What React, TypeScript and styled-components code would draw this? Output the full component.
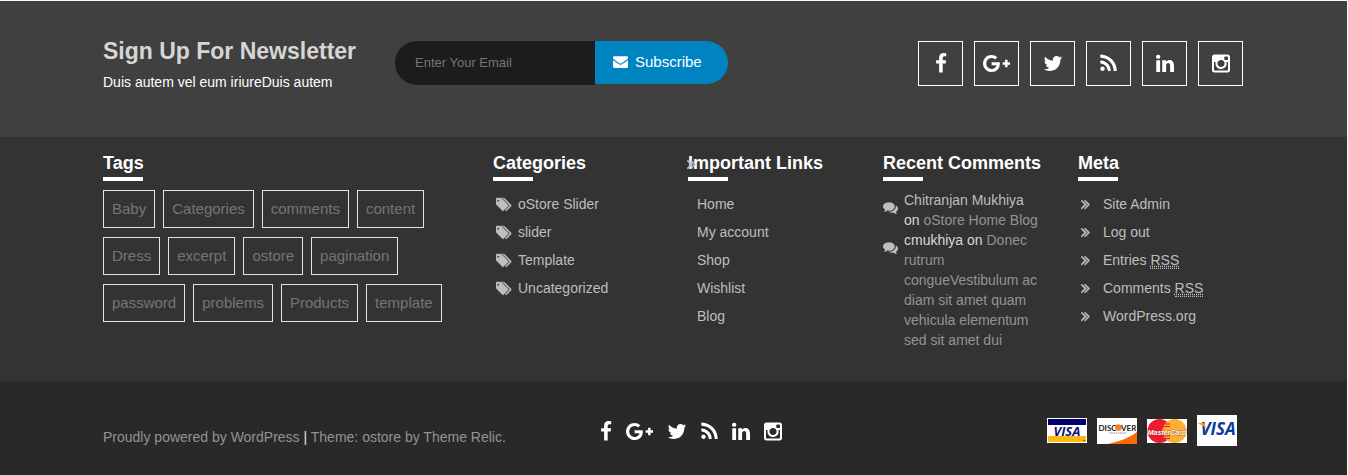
import React from "react";
import styled, { createGlobalStyle } from "styled-components";

const GlobalStyle = createGlobalStyle`
  *, *::before, *::after { box-sizing: border-box; }
  body {
    margin: 0;
    background: #fff;
    color: #fff;
    font: 14px/20px "Liberation Sans", Arial, sans-serif;
  }
  ul, h2, h3, p { margin: 0; padding: 0; }
  ul { list-style: none; }
  a { color: inherit; text-decoration: none; }
`;

/* ---------- icons ---------- */

const glyphs = {
  facebook: {
    box: "384 0 1024 1792",
    ratio: 1024 / 1792,
    d: "M1343 12v264h-157q-86 0-116 36t-30 108v189h293l-39 296h-254v759h-306v-759h-255v-296h255v-218q0-186 104-288.500t277-102.500q147 0 228 12z",
  },
  googlePlus: {
    box: "0 0 2304 1792",
    ratio: 2304 / 1792,
    d: "M1437 913q0 208-87 370.500t-248 254-369 91.500q-149 0-285-58t-234-156-156-234-58-285 58-285 156-234 234-156 285-58q286 0 491 192l-199 191q-117-113-292-113-123 0-227.500 62t-165.500 168.500-61 232.500 61 232.500 165.500 168.500 227.500 62q83 0 152.500-23t114.500-57.500 78.500-78.500 49-83 21.500-74h-416v-252h692q12 63 12 122zm867-122v210h-209v209h-210v-209h-209v-210h209v-209h210v209h209z",
  },
  twitter: {
    box: "64 0 1664 1792",
    ratio: 1664 / 1792,
    d: "M1684 408q-67 98-162 167 1 14 1 42 0 130-38 259.500t-115.500 248.500-184.500 210.500-258 146-323 54.500q-271 0-496-145 35 4 78 4 225 0 401-138-105-2-188-64.500t-114-159.500q33 5 61 5 43 0 85-11-112-23-185.500-111.500t-73.500-205.500v-4q68 38 146 41-66-44-105-115t-39-154q0-88 44-163 121 149 294.500 238.500t371.500 99.500q-8-38-8-74 0-134 94.500-228.500t228.500-94.500q140 0 236 102 109-21 205-78-37 115-142 178 93-10 186-50z",
  },
  rss: {
    box: "192 0 1408 1792",
    ratio: 1408 / 1792,
    d: "M576 1344q0 80-56 136t-136 56-136-56-56-136 56-136 136-56 136 56 56 136zm512 123q2 28-17 48-18 21-47 21h-135q-25 0-43-16.500t-20-41.500q-22-229-184.500-391.500t-391.500-184.500q-25-2-41.500-20t-16.500-43v-135q0-29 21-47 17-17 43-17h5q160 13 306 80.500t259 181.500q114 113 181.500 259t80.500 306zm512 2q2 27-18 47-18 20-46 20h-143q-26 0-44.500-17.500t-19.500-42.500q-12-215-101-408.500t-231.500-336-336-231.500-408.500-102q-25-1-42.500-19.500t-17.500-43.500v-143q0-28 20-46 18-18 44-18h3q262 13 501.500 120t425.500 294q187 186 294 425.500t120 501.500z",
  },
  linkedin: {
    box: "128 0 1536 1792",
    ratio: 1536 / 1792,
    d: "M477 625v991h-330v-991h330zm21-306q1 73-50.500 122t-135.500 49h-2q-82 0-132-49t-50-122q0-74 51.500-122.500t134.500-48.500 133 48.500 51 122.500zm1166 729v568h-329v-530q0-105-40.500-164.500t-126.500-59.500q-63 0-105.500 34.500t-63.500 85.500q-11 30-11 81v553h-329q2-399 2-647t-1-296l-1-48h329v144h-2q20-32 41-56t56.500-52 87-43.500 114.500-15.500q171 0 275 113.500t104 332.500z",
  },
  instagram: {
    box: "128 0 1536 1792",
    ratio: 1536 / 1792,
    d: "M1490 1426v-648h-135q20 63 20 131 0 126-64 232.500t-174 168.500-240 62q-197 0-337-135.500t-140-327.500q0-68 20-131h-141v648q0 26 17.500 43.500t43.500 17.500h1069q25 0 43-17.500t18-43.500zm-284-533q0-124-90.500-211.500t-218.500-87.500q-127 0-217.500 87.500t-90.500 211.500 90.500 211.500 217.500 87.500q128 0 218.500-87.500t90.500-211.500zm284-360v-165q0-28-20-48.500t-49-20.500h-174q-29 0-49 20.500t-20 48.500v165q0 29 20 49t49 20h174q29 0 49-20t20-49zm174-208v1142q0 81-58 139t-139 58h-1142q-81 0-139-58t-58-139v-1142q0-81 58-139t139-58h1142q81 0 139 58t58 139z",
  },
  envelope: {
    box: "0 0 1792 1792",
    ratio: 1,
    d: "M1792 710v794q0 66-47 113t-113 47h-1472q-66 0-113-47t-47-113v-794q44 49 101 87 362 246 497 345 57 42 92.500 65.500t94.500 48 110 24.500h2q51 0 110-24.500t94.500-48 92.500-65.500q170-123 498-345 57-39 100-87zm0-294q0 79-49 151t-122 123q-376 261-468 325-10 7-42.500 31t-54 38.500-52 32.500-57.500 27-50 9h-2q-23 0-50-9t-57.500-27-52-32.500-54-38.500-42.500-31q-91-64-262-182.500t-205-142.500q-62-42-117-115.500t-55-136.500q0-78 41.500-130t118.500-52h1472q65 0 112.500 47t47.500 113z",
  },
  tags: {
    box: "0 0 1920 1792",
    ratio: 1920 / 1792,
    d: "M384 448q0-53-37.500-90.500t-90.500-37.500-90.500 37.500-37.500 90.500 37.500 90.500 90.500 37.500 90.500-37.500 37.500-90.500zm1067 576q0 53-37 90l-491 492q-39 37-91 37-53 0-90-37l-715-716q-38-37-64.500-101t-26.500-117v-416q0-52 38-90t90-38h416q53 0 117 26.500t102 64.500l715 714q37 39 37 91zm384 0q0 53-37 90l-491 492q-39 37-91 37-36 0-59-14t-53-45l470-470q37-37 37-90 0-52-37-91l-715-714q-38-38-102-64.500t-117-26.500h224q53 0 117 26.500t102 64.500l715 714q37 39 37 91z",
    weight: 50,
  },
  comments: {
    box: "0 0 1792 1792",
    ratio: 1,
    d: "M1408 768q0 139-94 257t-256.500 186.500-353.500 68.500q-86 0-176-16-124 88-278 128-36 9-86 16h-3q-11 0-20.500-8t-11.500-21q-1-3-1-6.500t.5-6.500 2-6l2.500-5 3.500-5.500 4-5 4.500-5 4-4.500q5-6 23-25t26-29.500 22.500-29 25-38.500 20.500-44q-124-72-195-177t-71-224q0-139 94-257t256.500-186.500 353.500-68.500 353.500 68.500 256.500 186.500 94 257zm384 256q0 120-71 224.500t-195 176.500q10 24 20.500 44t25 38.500 22.500 29 26 29.500 23 25q1 1 4 4.500t4.500 5 4 5 3.500 5.500l2.500 5 2 6 .5 6.500-1 6.500q-3 14-13 22t-22 7q-50-7-86-16-154-40-278-128-90 16-176 16-271 0-472-132 58 4 88 4 161 0 309-45t264-129q125-92 192-212t67-254q0-77-23-152 129 71 204 178t75 230z",
  },
  chevrons: {
    box: "384 0 1024 1792",
    ratio: 1024 / 1792,
    d: "M979 960q0 13-10 23l-466 466q-10 10-23 10t-23-10l-50-50q-10-10-10-23t10-23l393-393-393-393q-10-10-10-23t10-23l50-50q10-10 23-10t23 10l466 466q10 10 10 23zm384 0q0 13-10 23l-466 466q-10 10-23 10t-23-10l-50-50q-10-10-10-23t10-23l393-393-393-393q-10-10-10-23t10-23l50-50q10-10 23-10t23 10l466 466q10 10 10 23z",
    weight: 80,
  },
};

type GlyphName = keyof typeof glyphs;

const Svg = styled.svg`
  display: block;
  flex: none;
  fill: currentColor;
`;

function Icon({ name, size }: { name: GlyphName; size: number }) {
  const g: { box: string; ratio: number; d: string; weight?: number } = glyphs[name];
  return (
    <Svg viewBox={g.box} width={Math.round(size * g.ratio)} height={size} aria-hidden="true">
      <path d={g.d} stroke="currentColor" strokeWidth={g.weight ?? 0} />
    </Svg>
  );
}

/* ---------- layout ---------- */

const Page = styled.footer`
  border-top: 1px solid #fafafa;
  border-right: 1px solid #fafafa;
`;

const Band = styled.section<{ $bg: string; $height: number }>`
  background: ${(p) => p.$bg};
  min-height: ${(p) => p.$height}px;
`;

const Container = styled.div`
  max-width: 1171px;
  margin: 0 auto;
  padding: 0 16px 0 15px;
`;

const NewsletterRow = styled(Container)`
  display: grid;
  grid-template-columns: 292px auto 1fr;
  align-items: start;
  padding-top: 40px;

  @media (max-width: 1100px) {
    grid-template-columns: 1fr;
    gap: 20px;
    padding-bottom: 20px;
  }
`;

const NewsletterTitle = styled.h2`
  color: #d6d6d6;
  font-size: 23px;
  line-height: 20px;
  margin-bottom: 11px;
`;

const Form = styled.form`
  display: flex;
  align-items: flex-start;
`;

const EmailInput = styled.input`
  width: 200px;
  height: 44px;
  padding: 0 20px 2px;
  border: 0;
  border-radius: 22px 0 0 22px;
  background: #1c1c1c;
  color: #ccc;
  font: 13px "Liberation Sans", Arial, sans-serif;
  outline: none;

  &::placeholder {
    color: #757575;
    opacity: 1;
  }
`;

const SubscribeButton = styled.button`
  display: flex;
  align-items: center;
  gap: 7px;
  height: 43px;
  padding: 0 26px 2px 18px;
  border: 0;
  border-radius: 0 22px 22px 0;
  background: #0083c1;
  color: #fff;
  font: 15px "Liberation Sans", Arial, sans-serif;
  cursor: pointer;
`;

const SocialList = styled.ul<{ $gap: number }>`
  display: flex;
  flex-wrap: wrap;
  gap: ${(p) => p.$gap}px;
`;

const BoxedSocials = styled(SocialList)`
  justify-content: flex-end;
`;

const SocialLink = styled.a<{ $boxed?: boolean }>`
  display: flex;
  align-items: center;
  justify-content: center;
  color: #fff;
  ${(p) => p.$boxed && "width: 45px; height: 45px; border: 1px solid #fff;"}
`;

const WidgetGrid = styled(Container)`
  display: grid;
  grid-template-columns: repeat(6, 1fr);
  column-gap: 30px;
  padding-top: 15px;

  @media (max-width: 1100px) {
    grid-template-columns: repeat(2, 1fr);
    row-gap: 24px;
    padding-bottom: 24px;
  }
`;

const Widget = styled.section<{ $wide?: boolean }>`
  min-width: 0;
  ${(p) => p.$wide && "grid-column: span 2;"}
`;

const WidgetTitle = styled.h3`
  position: relative;
  margin-bottom: 9px;
  font-size: 18px;
  line-height: 22px;
  white-space: nowrap;

  &::after {
    content: "";
    display: block;
    width: 40px;
    height: 4px;
    margin-top: 3px;
    background: #fff;
  }
`;

const TitleMark = styled.span`
  position: absolute;
  left: -1px;
  top: 4px;
  color: #bbb;
`;

const TagCloud = styled.ul`
  display: flex;
  flex-wrap: wrap;
  gap: 9px 8px;
`;

const Tag = styled.a`
  display: block;
  padding: 8px;
  border: 1px solid #e4e4e4;
  color: #757575;
  font-size: 15px;
  line-height: 20px;
`;

const LinkItem = styled.li<{ $indent: number; $gap?: number }>`
  display: flex;
  align-items: center;
  gap: ${(p) => p.$gap ?? 0}px;
  padding-left: ${(p) => p.$indent}px;
  color: #bebebe;
  line-height: 28px;
  white-space: nowrap;
`;

const Abbr = styled.abbr`
  border-bottom: 1px dotted #bbb;
  text-decoration: underline dotted;
`;

const CommentItem = styled.li`
  display: flex;
  gap: 6px;
  padding-right: 6px;
  color: #bebebe;

  svg {
    margin-top: 10px;
  }
`;

const CommentText = styled.p`
  color: #d8d8d8;
`;

const Muted = styled.a`
  color: #939393;
`;

const Author = styled.a`
  color: #bebebe;
`;

const BottomRow = styled(Container)`
  display: grid;
  grid-template-columns: 497px 1fr auto;
  align-items: start;
  padding-top: 34px;

  @media (max-width: 1100px) {
    grid-template-columns: 1fr;
    gap: 16px;
    padding-bottom: 20px;
  }
`;

const Credits = styled.p`
  padding-top: 12px;
  color: #e4e4e4;
`;

const BottomSocials = styled(SocialList)`
  padding-top: 6px;
`;

const CardList = styled.ul`
  display: flex;
  align-items: center;
  gap: 10px;
  padding-right: 6px;
`;

/* ---------- payment cards ---------- */

const VisaClassic = () => (
  <Svg width="40" height="25" viewBox="0 0 40 25" role="img" aria-label="Visa">
    <rect width="40" height="25" fill="#fff" />
    <rect x="1" y="1" width="38" height="6" fill="#00006c" />
    <rect x="1" y="18" width="38" height="6" fill="#fdb913" />
    <rect x="36" y="22" width="2" height="1" fill="#7a6a30" />
    <text x="20" y="17.600" textAnchor="middle" fontFamily="Open Sans, sans-serif" fontSize="13" fontWeight="700" fontStyle="italic" fill="#12127a">VISA</text>
  </Svg>
);

const Discover = () => (
  <Svg width="40" height="26" viewBox="0 0 40 26" role="img" aria-label="Discover">
    <rect width="40" height="26" fill="#fff" />
    <path d="M11 26Q32 21 40 14V26Z" fill="#ff6a00" />
    <text x="1.500" y="12.500" fontFamily="Lato, sans-serif" fontSize="8" fontWeight="700" fill="#222">DISC</text>
    <circle cx="21.500" cy="9.500" r="3.300" fill="#f58220" />
    <text x="24" y="12.500" fontFamily="Lato, sans-serif" fontSize="8" fontWeight="700" fill="#222">VER</text>
    <path d="M12 15h17" stroke="#888" strokeWidth="1" strokeDasharray="1.500 .7" />
  </Svg>
);

const MasterCard = () => (
  <Svg width="40" height="24" viewBox="0 0 40 24" role="img" aria-label="MasterCard">
    <rect width="40" height="24" fill="#fff" />
    <circle cx="12.500" cy="12" r="12" fill="#ed1c2e" />
    <circle cx="27.500" cy="12" r="12" fill="#fbb034" />
    <path d="M17 5h6M16 7.500h7M16 17h7M17 19.500h6" stroke="#ed1c2e" strokeWidth="1.200" />
    <text
      x="20"
      y="15.500"
      textAnchor="middle"
      fontFamily="Liberation Sans, Arial, sans-serif"
      fontSize="7"
      fontWeight="700"
      fontStyle="italic"
      fill="#fff"
      stroke="#7a2020"
      strokeOpacity="0.5"
      strokeWidth="1"
      paintOrder="stroke"
    >
      MasterCard
    </text>
  </Svg>
);

const VisaModern = () => (
  <Svg width="40" height="31" viewBox="0 0 40 31" role="img" aria-label="Visa">
    <rect width="40" height="31" fill="#fff" />
    <text x="21" y="20" textAnchor="middle" fontFamily="Open Sans, sans-serif" fontSize="17" fontWeight="700" fontStyle="italic" fill="#0a3a9a">VISA</text>
    <path d="M1 8h5q1.500 0 2 2l1 4Q6 10 1 8.600Z" fill="#f7a51c" />
  </Svg>
);

/* ---------- content ---------- */

const socials: { name: GlyphName; label: string }[] = [
  { name: "facebook", label: "Facebook" },
  { name: "googlePlus", label: "Google Plus" },
  { name: "twitter", label: "Twitter" },
  { name: "rss", label: "RSS" },
  { name: "linkedin", label: "LinkedIn" },
  { name: "instagram", label: "Instagram" },
];

const tags = [
  "Baby", "Categories", "comments", "content", "Dress", "excerpt",
  "ostore", "pagination", "password", "problems", "Products", "template",
];

const categories = ["oStore Slider", "slider", "Template", "Uncategorized"];
const links = ["Home", "My account", "Shop", "Wishlist", "Blog"];

const rss = <Abbr title="Really Simple Syndication">RSS</Abbr>;
const meta: React.ReactNode[] = ["Site Admin", "Log out", <>Entries {rss}</>, <>Comments {rss}</>, "WordPress.org"];

const socialItems = (boxed: boolean) =>
  socials.map((s) => (
    <li key={s.name}>
      <SocialLink href="#" aria-label={s.label} $boxed={boxed}>
        <Icon name={s.name} size={21} />
      </SocialLink>
    </li>
  ));

export default function App() {
  return (
    <>
      <GlobalStyle />
      <Page>
        <Band $bg="#404040" $height={136}>
          <NewsletterRow>
            <div>
              <NewsletterTitle>Sign Up For Newsletter</NewsletterTitle>
              <p>Duis autem vel eum iriureDuis autem</p>
            </div>
            <Form onSubmit={(e) => e.preventDefault()}>
              <EmailInput type="email" aria-label="Email" placeholder="Enter Your Email" />
              <SubscribeButton type="submit">
                <Icon name="envelope" size={15} />
                Subscribe
              </SubscribeButton>
            </Form>
            <BoxedSocials $gap={11}>{socialItems(true)}</BoxedSocials>
          </NewsletterRow>
        </Band>

        <Band $bg="#333333" $height={244}>
          <WidgetGrid>
            <Widget $wide>
              <WidgetTitle>Tags</WidgetTitle>
              <TagCloud>
                {tags.map((t) => (
                  <li key={t}>
                    <Tag href="#">{t}</Tag>
                  </li>
                ))}
              </TagCloud>
            </Widget>
            <Widget>
              <WidgetTitle>Categories</WidgetTitle>
              <ul>
                {categories.map((c) => (
                  <LinkItem key={c} $indent={3} $gap={6}>
                    <Icon name="tags" size={15} />
                    <a href="#">{c}</a>
                  </LinkItem>
                ))}
              </ul>
            </Widget>
            <Widget>
              <WidgetTitle>
                Important Links
                <TitleMark>
                  <Icon name="chevrons" size={16} />
                </TitleMark>
              </WidgetTitle>
              <ul>
                {links.map((l) => (
                  <LinkItem key={l} $indent={9}>
                    <a href="#">{l}</a>
                  </LinkItem>
                ))}
              </ul>
            </Widget>
            <Widget>
              <WidgetTitle>Recent Comments</WidgetTitle>
              <ul>
                <CommentItem>
                  <Icon name="comments" size={15} />
                  <CommentText>
                    <Author href="#">Chitranjan Mukhiya</Author> on <Muted href="#">oStore Home Blog</Muted>
                  </CommentText>
                </CommentItem>
                <CommentItem>
                  <Icon name="comments" size={15} />
                  <CommentText>
                    cmukhiya on{" "}
                    <Muted href="#">Donec rutrum congueVestibulum ac diam sit amet quam vehicula elementum sed sit amet dui</Muted>
                  </CommentText>
                </CommentItem>
              </ul>
            </Widget>
            <Widget>
              <WidgetTitle>Meta</WidgetTitle>
              <ul>
                {meta.map((m, i) => (
                  <LinkItem key={i} $indent={3} $gap={13}>
                    <Icon name="chevrons" size={16} />
                    <a href="#">{m}</a>
                  </LinkItem>
                ))}
              </ul>
            </Widget>
          </WidgetGrid>
        </Band>

        <Band $bg="#292929" $height={94}>
          <BottomRow>
            <Credits>
              <Muted href="#">Proudly powered by WordPress</Muted> | <Muted href="#">Theme: ostore by Theme Relic.</Muted>
            </Credits>
            <BottomSocials $gap={14}>{socialItems(false)}</BottomSocials>
            <CardList>
              <li><VisaClassic /></li>
              <li><Discover /></li>
              <li><MasterCard /></li>
              <li><VisaModern /></li>
            </CardList>
          </BottomRow>
        </Band>
      </Page>
    </>
  );
}
